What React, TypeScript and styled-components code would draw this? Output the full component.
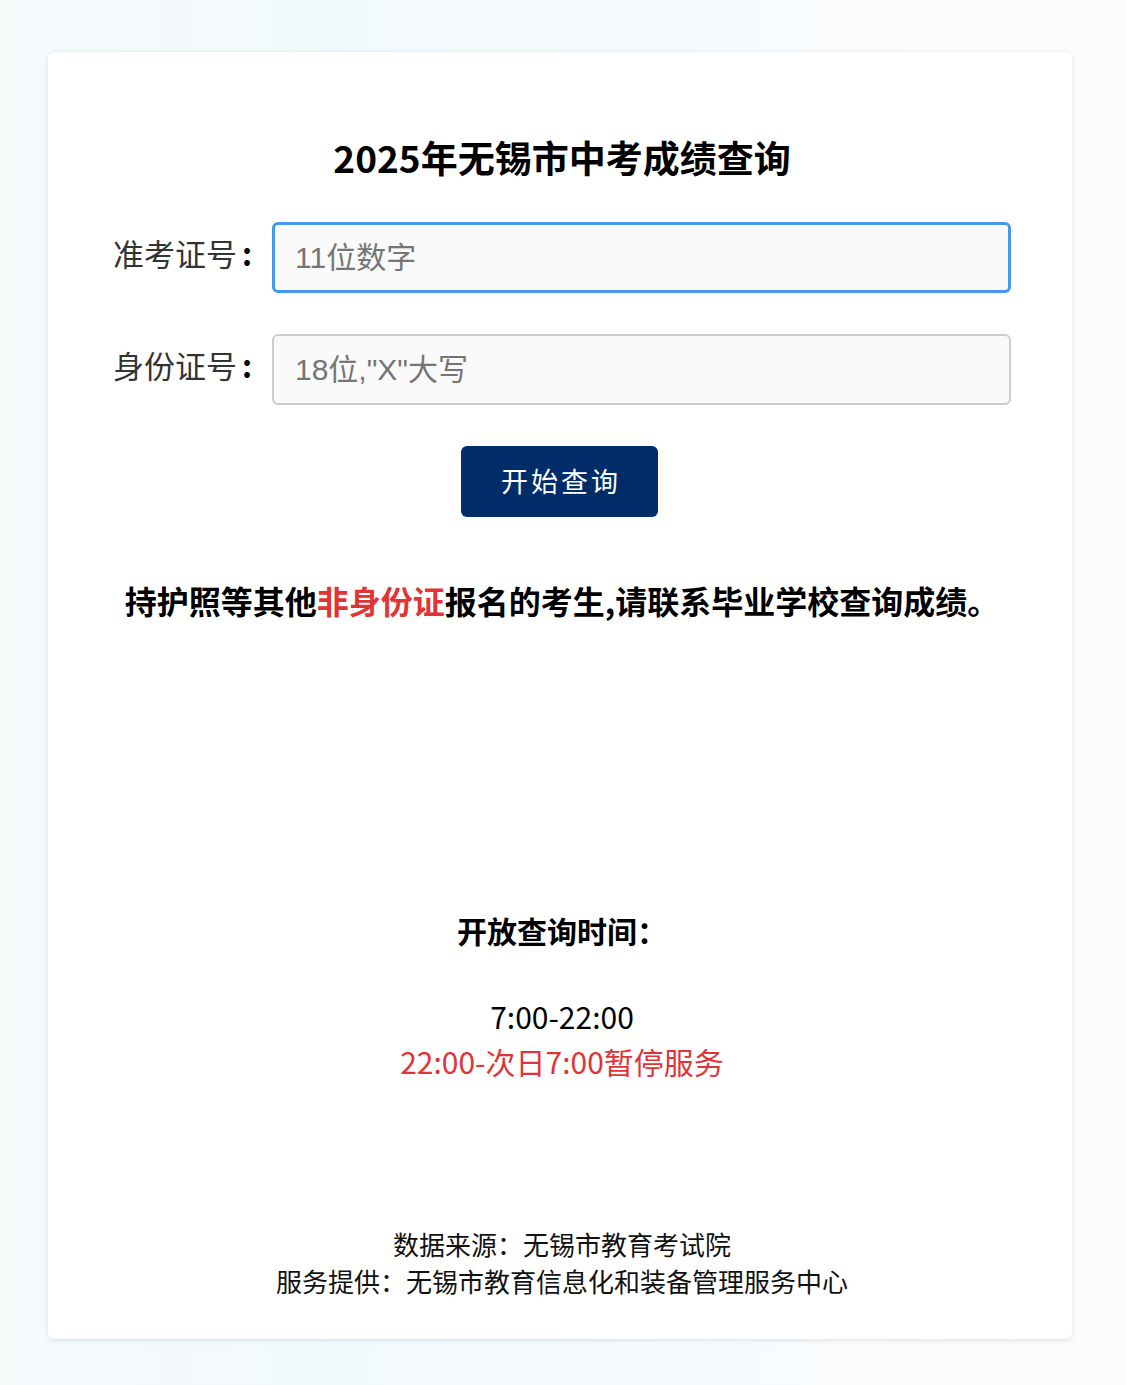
import styled, { createGlobalStyle } from 'styled-components';

const GlobalStyle = createGlobalStyle`
  html, body {
    margin: 0;
    padding: 0;
  }
  body {
    min-height: 1385px;
    background: linear-gradient(90deg, #f5fafb 0%, #f2f9fc 30%, #f8fbfd 60%, #fbfcfe 100%);
    font-family: "Noto Sans CJK SC", "Noto Sans", sans-serif;
    color: #000;
  }
`;

const Page = styled.div`
  padding: 52px 54px 47px 48px;
`;

const Card = styled.main`
  background: #fff;
  border-radius: 6px;
  box-shadow: 0 1px 5px rgba(0, 0, 0, 0.12);
  padding: 81px 61px 40px 65px;
  display: flex;
  flex-direction: column;
  align-items: stretch;
`;

const Title = styled.h1`
  margin: 0;
  font-size: 37px;
  font-weight: 700;
  line-height: 49px;
  text-align: center;
`;

const Form = styled.form`
  margin-top: 40px;
  display: flex;
  flex-direction: column;
  gap: 41px;
`;

const Field = styled.label`
  display: flex;
  align-items: center;
`;

const FieldLabel = styled.span`
  width: 159px;
  flex-shrink: 0;
  padding-bottom: 10px;
  font-size: 31px;
  color: #333;
  white-space: nowrap;
`;

const Colon = styled.span`
  margin-left: 5px;
  color: #000;
  font-weight: 700;
`;

const Input = styled.input<{ $active?: boolean }>`
  flex: 1;
  box-sizing: border-box;
  height: 71px;
  min-width: 0;
  padding: 0 0 0 ${(p) => (p.$active ? '20px' : '21px')};
  border: ${(p) => (p.$active ? '3px solid #4598ed' : '2px solid #cdcdcd')};
  border-radius: 6px;
  background: #fafafa;
  font-family: "Liberation Sans", "Noto Sans CJK SC", sans-serif;
  font-size: 30px;
  color: #333;
  outline: none;

  &::placeholder {
    color: #757575;
  }
`;

const Actions = styled.div`
  display: flex;
  justify-content: center;
  padding-right: 5px;
`;

const SubmitButton = styled.button`
  width: 197px;
  height: 71px;
  border: none;
  border-radius: 6px;
  background: #002d6a;
  color: #fff;
  font-family: "Noto Sans CJK SC", sans-serif;
  font-size: 27px;
  letter-spacing: 3px;
  padding: 0 0 2px 3px;
  cursor: pointer;
`;

const Notice = styled.p`
  margin: 61px 0 0;
  font-size: 32px;
  font-weight: 700;
  line-height: 45px;
  text-align: center;
  white-space: nowrap;
`;

const Red = styled.span`
  color: #e03437;
`;

const Hours = styled.section`
  margin-top: 286px;
  text-align: center;
`;

const HoursTitle = styled.h2`
  margin: 0 0 43px;
  font-size: 30px;
  font-weight: 700;
  line-height: 42px;
`;

const HoursLine = styled.div<{ $alert?: boolean }>`
  font-size: 30px;
  line-height: 45px;
  color: ${(p) => (p.$alert ? '#e03437' : '#000')};
`;

const Footer = styled.footer`
  margin-top: 141px;
  text-align: center;
  font-size: 26px;
  line-height: 37px;
  color: #111;
`;

export default function App() {
  return (
    <>
      <GlobalStyle />
      <Page>
        <Card>
          <Title>2025年无锡市中考成绩查询</Title>
          <Form onSubmit={(e) => e.preventDefault()}>
            <Field>
              <FieldLabel>
                准考证号<Colon>:</Colon>
              </FieldLabel>
              <Input $active autoFocus placeholder="11位数字" />
            </Field>
            <Field>
              <FieldLabel>
                身份证号<Colon>:</Colon>
              </FieldLabel>
              <Input placeholder={'18位,"X"大写'} />
            </Field>
            <Actions>
              <SubmitButton type="submit">开始查询</SubmitButton>
            </Actions>
          </Form>
          <Notice>
            持护照等其他<Red>非身份证</Red>报名的考生,请联系毕业学校查询成绩。
          </Notice>
          <Hours>
            <HoursTitle>开放查询时间：</HoursTitle>
            <HoursLine>7:00-22:00</HoursLine>
            <HoursLine $alert>22:00-次日7:00暂停服务</HoursLine>
          </Hours>
          <Footer>
            <div>数据来源：无锡市教育考试院</div>
            <div>服务提供：无锡市教育信息化和装备管理服务中心</div>
          </Footer>
        </Card>
      </Page>
    </>
  );
}
